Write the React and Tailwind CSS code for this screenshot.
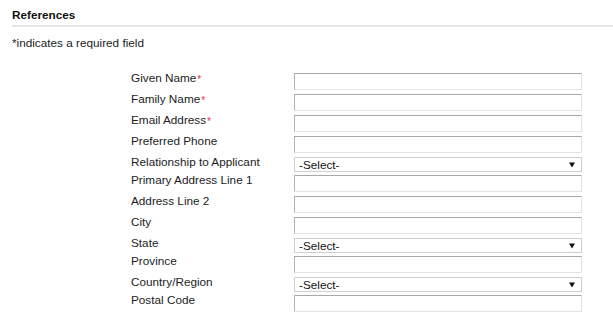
import React from "react";

const rows = [
  { label: "Given Name", req: true, type: "input" },
  { label: "Family Name", req: true, type: "input" },
  { label: "Email Address", req: true, type: "input" },
  { label: "Preferred Phone", type: "input" },
  { label: "Relationship to Applicant", type: "select" },
  { label: "Primary Address Line 1", type: "input" },
  { label: "Address Line 2", type: "input" },
  { label: "City", type: "input" },
  { label: "State", type: "select" },
  { label: "Province", type: "input" },
  { label: "Country/Region", type: "select" },
  { label: "Postal Code", type: "input" },
];

function Control({ type }) {
  if (type === "select") {
    return (
      <div className="relative w-[288px] h-[15px] mb-[3px] border border-[#cfcfcf] bg-white flex items-center">
        <span className="pl-[4px] leading-[13px] text-[#111]">-Select-</span>
        <svg
          className="absolute right-[6px] top-[4px]"
          width="6"
          height="6"
          viewBox="0 0 6 6"
        >
          <path d="M0 0.5 H6 L3 5.5 Z" fill="#111" />
        </svg>
      </div>
    );
  }
  return (
    <div className="w-[288px] h-[17px] mb-[4px] bg-white border border-t-[#a8a8a8] border-l-[#b4b4b4] border-b-[#e2e2e2] border-r-[#e2e2e2]" />
  );
}

export default function App() {
  return (
    <div className="bg-white w-[613px] h-[334px] overflow-hidden font-['Liberation_Sans',Arial,sans-serif] text-[11.75px] text-[#1c1c1c]">
      <div className="pl-[12px] pt-[8px]">
        <h2 className="font-bold leading-[14px] pb-[3px] border-b-2 border-[#e6e6e6] text-[#111]">
          References
        </h2>
        <p className="mt-[9px] leading-[14px]">*indicates a required field</p>
      </div>
      <div className="mt-[23px] pl-[131px] flex flex-col">
        {rows.map((r) => (
          <div key={r.label} className="flex items-start">
            <div className="w-[163px] shrink-0 leading-[13px] -mt-[2px]">
              {r.label}
              {r.req && (
                <span className="text-[#d9363e] text-[10px] relative top-[1px] ml-px">*</span>
              )}
            </div>
            <Control type={r.type} />
          </div>
        ))}
      </div>
    </div>
  );
}
